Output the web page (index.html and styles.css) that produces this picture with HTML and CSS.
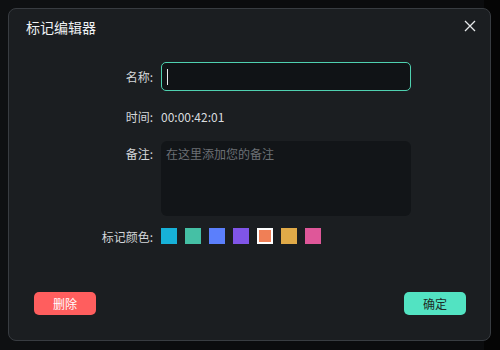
FILE: index.html
```html
<!DOCTYPE html>
<html>
    <head>
        <title> 标记编辑器 </title>
        <meta charset="utf-8"/>
        <link rel="stylesheet" href="styles.css">
    </head>
    <body>
        <div class="backdrop">

            <section class="dialog">

                <header>
                    <h1> 标记编辑器 </h1>
                    <button class="close">
                        <svg width="12" height="12" viewBox="0 0 12 12">
                            <path d="M1 1 L11 11 M11 1 L1 11" stroke="#e6e8ea" stroke-width="1.3" fill="none"/>
                        </svg>
                    </button>
                </header>

                <main>
                    <article class="row name">
                        <label class="label">名称:</label>
                        <div class="input"><span class="caret"></span></div>
                    </article>

                    <article class="row time">
                        <label class="label">时间:</label>
                        <span class="value">00:00:42:01</span>
                    </article>

                    <article class="row note">
                        <label class="label">备注:</label>
                        <div class="textarea">在这里添加您的备注</div>
                    </article>

                    <article class="row colors">
                        <label class="label">标记颜色:</label>
                        <div class="swatches">
                            <span class="swatch cyan"></span>
                            <span class="swatch teal"></span>
                            <span class="swatch blue"></span>
                            <span class="swatch purple"></span>
                            <span class="swatch orange selected"></span>
                            <span class="swatch yellow"></span>
                            <span class="swatch pink"></span>
                        </div>
                    </article>
                </main>

                <footer>
                    <button class="delete">删除</button>
                    <button class="confirm">确定</button>
                </footer>

            </section>

        </div>
    </body>
</html>
```

FILE: styles.css
```css
* {
    margin: 0;
    padding: 0;
    box-sizing: border-box;
}

body {
    width: 500px;
    height: 350px;
    overflow: hidden;

    background-color: #0b0d0f;
    font-family: 'Noto Sans CJK SC', 'Noto Sans', sans-serif;
    color: #d4d7da;
}

.backdrop {
    width: 100%;
    height: 100%;
    padding: 8px 0 0 8px;

    background: linear-gradient(to right, #0e1012 0, #0e1012 160px, #0b0c0e 160px, #0b0c0e 484px, #050505 484px);
}

.dialog {
    width: 483px;
    height: 333px;

    display: flex;
    flex-direction: column;

    background-color: #1b1e21;
    border: 1px solid #383c41;
    border-radius: 8px;
}

header {
    height: 36px;
    padding: 0 12px 0 17px;

    display: flex;
    justify-content: space-between;
    align-items: center;
}

header h1 {
    font-size: 14px;
    font-weight: normal;
    color: #eef1f3;
}

header .close {
    width: 16px;
    height: 16px;
    margin-top: -2px;

    display: flex;
    justify-content: center;
    align-items: center;

    background: none;
    border: none;
}

main {
    margin-top: 17px;

    display: flex;
    flex-direction: column;
}

main .row {
    display: flex;
    align-items: center;
    gap: 8px;

    font-size: 12px;
}

main .row .label {
    width: 144px;
    text-align: right;
    color: #d4d7da;
}

main .name .input {
    width: 250px;
    height: 29px;
    padding-left: 5px;

    display: flex;
    align-items: center;

    background-color: #101316;
    border: 1px solid #4fd1b0;
    border-radius: 5px;
}

main .name .caret {
    width: 1px;
    height: 16px;
    background-color: #e8eaec;
}

main .time {
    height: 18px;
    margin-top: 16px;
}

main .time .value {
    color: #d9dcdf;
}

main .note {
    margin-top: 16px;
    align-items: flex-start;
    line-height: 18px;
}

main .note .label {
    padding-top: 4px;
}

main .note .textarea {
    width: 250px;
    height: 75px;
    padding: 4px 5px;

    background-color: #121518;
    border-radius: 6px;
    color: #6c7075;
}

main .colors {
    height: 20px;
    margin-top: 10px;
}

main .swatches {
    display: flex;
    gap: 8px;
}

main .swatch {
    width: 16px;
    height: 16px;
}

main .swatch.selected {
    border: 2px solid #ffffff;
}

.cyan   { background-color: #17b1d8; }
.teal   { background-color: #45c0a5; }
.blue   { background-color: #5b7ffc; }
.purple { background-color: #8055e8; }
.orange { background-color: #f07f56; }
.yellow { background-color: #e0aa48; }
.pink   { background-color: #df5799; }

footer {
    margin-top: auto;
    padding: 0 24px 25px 25px;

    display: flex;
    justify-content: space-between;
}

footer button {
    width: 62px;
    height: 23px;

    border: none;
    border-radius: 5px;
    font-family: 'Noto Sans CJK SC', sans-serif;
    font-size: 12px;
}

footer .delete {
    background-color: #ff5e5e;
    color: #ffffff;
}

footer .confirm {
    background-color: #52e3c2;
    color: #1f2b28;
}
```
